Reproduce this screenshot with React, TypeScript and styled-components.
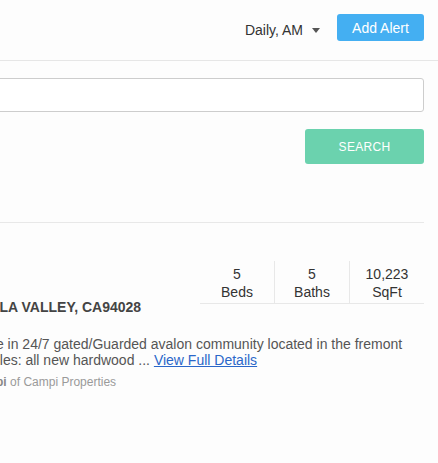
import React from 'react'
import styled, { createGlobalStyle } from 'styled-components'

const GlobalStyle = createGlobalStyle`
  html, body {
    margin: 0;
    padding: 0;
    background: #fdfdfd;
  }
  body {
    font-family: 'Liberation Sans', Arial, Helvetica, sans-serif;
    color: #333;
    -webkit-font-smoothing: antialiased;
  }
`

const Viewport = styled.div`
  width: 438px;
  height: 463px;
  overflow: hidden;
`

// the page is wider than the window; its left part runs off screen
const Page = styled.div`
  width: 738px;
  margin-left: -300px;
`

const Header = styled.header`
  height: 60px;
  display: flex;
  align-items: center;
  justify-content: flex-end;
  padding: 0 14px;
  border-bottom: 1px solid #e6e6e6;
  box-sizing: content-box;
`

const Frequency = styled.div`
  display: flex;
  align-items: center;
  gap: 9px;
  font-size: 14px;
  color: #333;
  margin-right: 17px;
`

const Caret = styled.span`
  width: 0;
  height: 0;
  border-left: 4.5px solid transparent;
  border-right: 4.5px solid transparent;
  border-top: 5px solid #555;
`

const AlertButton = styled.button`
  height: 27px;
  width: 87px;
  border: none;
  border-radius: 3px;
  background: #44aff2;
  color: #fff;
  font-family: inherit;
  font-size: 14px;
  padding: 0;
  margin-top: -5px;
`

const Content = styled.div`
  padding: 0 14px 0 30px;
`

const SearchForm = styled.div`
  display: flex;
  flex-direction: column;
  align-items: flex-end;
  gap: 17px;
  padding-top: 17px;
`

const SearchInput = styled.input`
  width: 100%;
  height: 34px;
  box-sizing: border-box;
  border: 1px solid #cdcdcd;
  border-radius: 3px;
  background: #fff;
  font-family: inherit;
  font-size: 14px;
  padding: 0 10px;
`

const SearchButton = styled.button`
  width: 119px;
  height: 35px;
  border: none;
  border-radius: 3px;
  background: #6bd2ae;
  color: #fff;
  font-family: inherit;
  font-size: 12px;
  letter-spacing: 0.3px;
  text-transform: uppercase;
  padding: 0;
`

const Divider = styled.hr`
  border: none;
  border-top: 1px solid #e8e8e8;
  margin: 58px 0 0;
`

const Listing = styled.div`
  display: flex;
  gap: 20px;
  padding: 38px 0 31px;
`

const Thumb = styled.div`
  width: 200px;
  height: 150px;
  flex: none;
  background: #eee;
`

const Info = styled.div`
  flex: 1;
  display: flow-root;
`

const Stats = styled.div`
  float: right;
  width: 224px;
  display: flex;
  border-bottom: 1px solid #e8e8e8;
`

const Stat = styled.div<{ first?: boolean }>`
  flex: 1;
  text-align: center;
  font-size: 14px;
  line-height: 18px;
  color: #333;
  padding: 4px 0 2px;
  border-left: ${({ first }) => (first ? 'none' : '1px solid #e8e8e8')};
`

const Address = styled.div`
  margin-top: 37px;
  font-size: 14px;
  line-height: 18px;
  font-weight: bold;
  color: #444;
`

const Description = styled.p`
  margin: 20px 0 0;
  font-size: 14px;
  line-height: 16px;
  color: #555;
`

const DetailsLink = styled.a`
  color: #2b67c9;
  text-decoration: underline;
`

const Agent = styled.div`
  margin-top: 6px;
  font-size: 12px;
  line-height: 16px;
  color: #9a9a9a;

  b {
    color: #888;
  }
`

interface ListingData {
  address: string
  beds: string
  baths: string
  sqft: string
  description: string
  agent: string
  office: string
}

const listings: ListingData[] = [
  {
    address: 'PORTOLA VALLEY, CA94028',
    beds: '5',
    baths: '5',
    sqft: '10,223',
    description:
      'Its home in 24/7 gated/Guarded avalon community located in the fremont hills. Rules: all new hardwood ...',
    agent: 'Jill Campi',
    office: 'Campi Properties',
  },
  {
    address: 'PORTOLA VALLEY, CA94028',
    beds: '4',
    baths: '4',
    sqft: '6,120',
    description: 'Private estate set on a quiet cul-de-sac with views of the bay ...',
    agent: 'Jill Campi',
    office: 'Campi Properties',
  },
]

function ListingRow({ data }: { data: ListingData }) {
  return (
    <Listing>
      <Thumb />
      <Info>
        <Stats>
          <Stat first>
            {data.beds}
            <br />
            Beds
          </Stat>
          <Stat>
            {data.baths}
            <br />
            Baths
          </Stat>
          <Stat>
            {data.sqft}
            <br />
            SqFt
          </Stat>
        </Stats>
        <Address>{data.address}</Address>
        <Description>
          {data.description} <DetailsLink href="#">View Full Details</DetailsLink>
        </Description>
        <Agent>
          <b>{data.agent}</b> of {data.office}
        </Agent>
      </Info>
    </Listing>
  )
}

export default function App() {
  return (
    <Viewport>
      <GlobalStyle />
      <Page>
        <Header>
          <Frequency>
            Daily, AM
            <Caret />
          </Frequency>
          <AlertButton>Add Alert</AlertButton>
        </Header>
        <Content>
          <SearchForm>
            <SearchInput type="text" />
            <SearchButton>Search</SearchButton>
          </SearchForm>
          <Divider />
          {listings.map((l, i) => (
            <ListingRow key={i} data={l} />
          ))}
        </Content>
      </Page>
    </Viewport>
  )
}
